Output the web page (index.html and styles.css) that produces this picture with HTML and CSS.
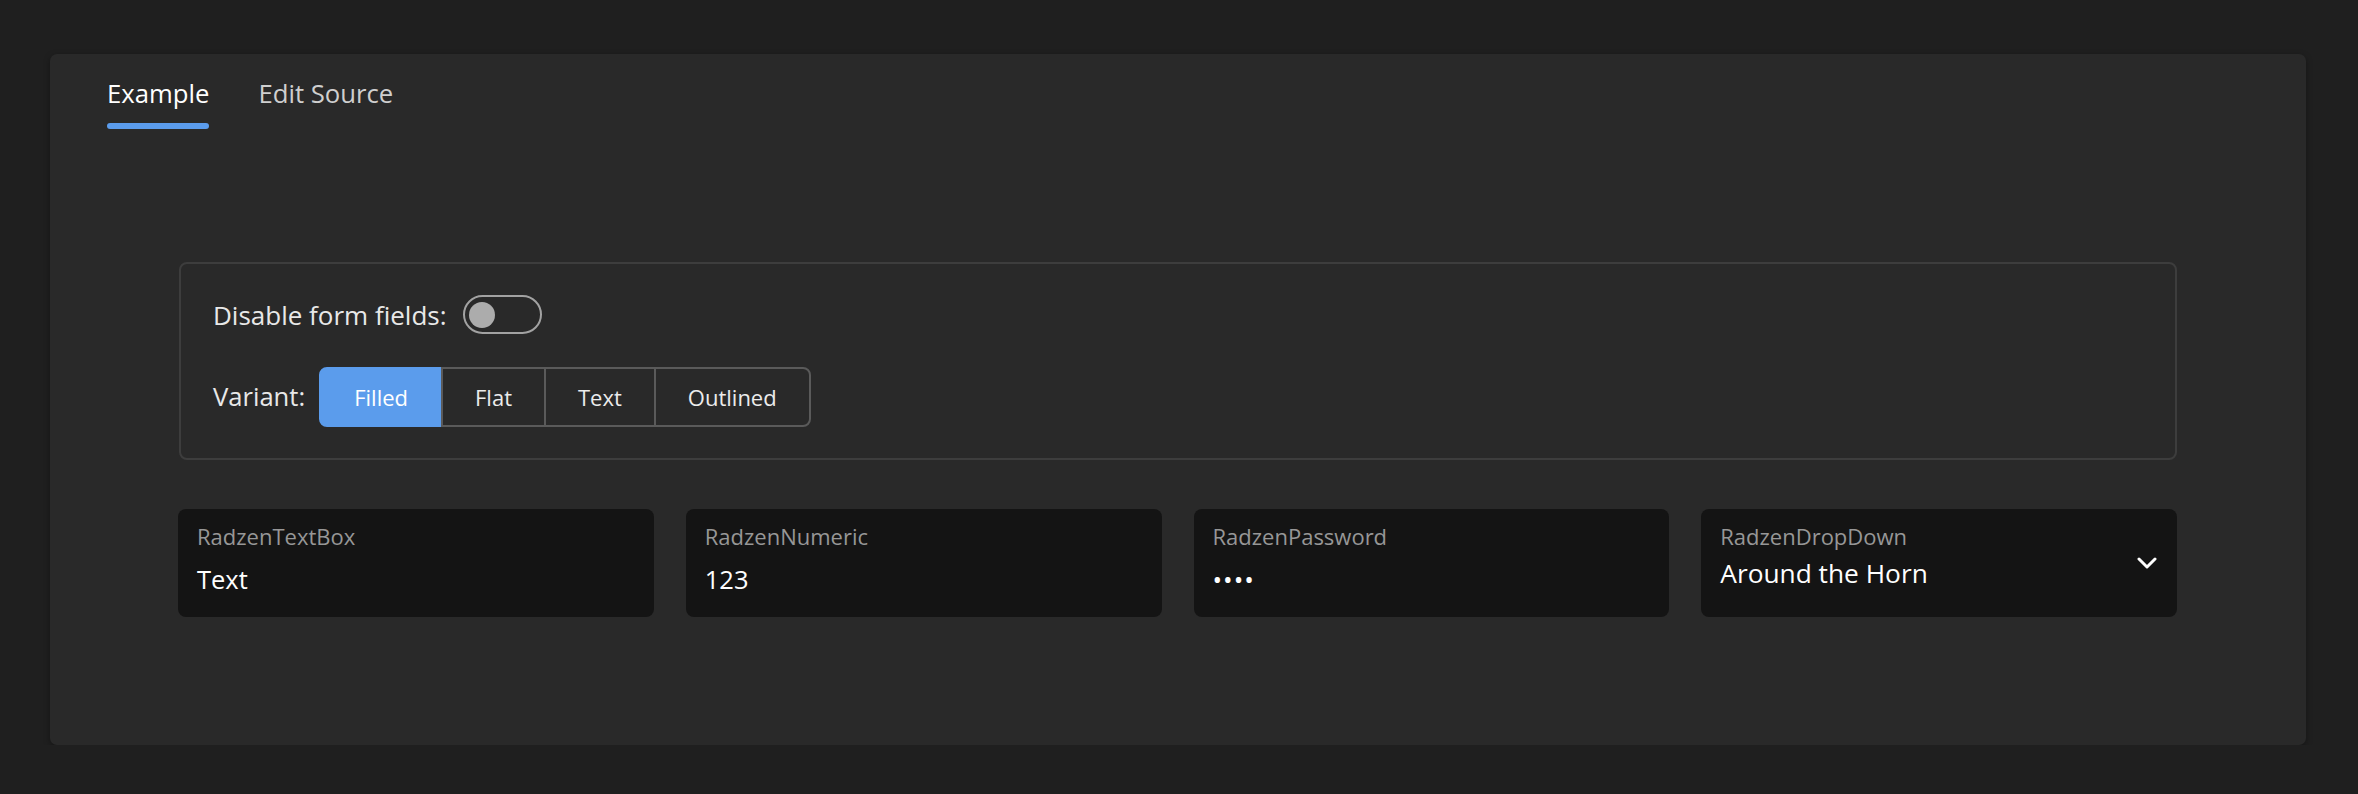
FILE: index.html
```html
<!DOCTYPE html>
<html lang="en">
<head>
<meta charset="utf-8">
<title>Radzen form fields</title>
<link rel="stylesheet" href="styles.css">
</head>
<body>
<div class="card">
  <nav class="tabs">
    <div class="tab active">Example</div>
    <div class="tab">Edit Source</div>
  </nav>
  <div class="panel">
    <div class="options">
      <div class="opt-row opt-row-switch">
        <span class="opt-label">Disable form fields:</span>
        <span class="switch"><span class="knob"></span></span>
      </div>
      <div class="opt-row opt-row-variant">
        <span class="opt-label">Variant:</span>
        <div class="btn-group">
          <span class="btn selected">Filled</span>
          <span class="btn">Flat</span>
          <span class="btn">Text</span>
          <span class="btn">Outlined</span>
        </div>
      </div>
    </div>
    <div class="fields">
      <div class="field">
        <div class="field-label">RadzenTextBox</div>
        <div class="field-value">Text</div>
      </div>
      <div class="field">
        <div class="field-label">RadzenNumeric</div>
        <div class="field-value">123</div>
      </div>
      <div class="field">
        <div class="field-label">RadzenPassword</div>
        <div class="field-value dots">••••</div>
      </div>
      <div class="field field-dropdown">
        <div class="dd-body">
          <div class="field-label">RadzenDropDown</div>
          <div class="field-value dd-value">Around the Horn</div>
        </div>
        <svg class="chevron" width="20" height="12" viewBox="0 0 20 12" aria-hidden="true">
          <polyline points="2,2 10,10 18,2" fill="none" stroke="#ffffff" stroke-width="3" stroke-linecap="round" stroke-linejoin="round"/>
        </svg>
      </div>
    </div>
  </div>
</div>
</body>
</html>
```

FILE: styles.css
```css
html, body {
  margin: 0;
  padding: 0;
  background: #1f1f1f;
}
body {
  padding: 54px 52px 0 50px;
  font-family: "Open Sans", "Noto Sans", sans-serif;
  color: #e6e6e6;
}
.card {
  background: #292929;
  border-radius: 7px;
  box-shadow: 0 2px 6px rgba(0, 0, 0, 0.35);
  min-height: 691px;
  box-sizing: border-box;
}
.tabs {
  display: flex;
  padding-left: 52px;
  gap: 39px;
}
.tab {
  padding: 22px 5px 0;
  font-size: 25.7px;
  line-height: 36px;
  color: #cfcfcf;
}
.tab::after {
  content: "";
  display: block;
  height: 6px;
  margin-top: 11px;
  border-radius: 3px;
  background: transparent;
}
.tab.active {
  color: #ffffff;
}
.tab.active::after {
  background: #5b9cec;
}
.panel {
  padding: 133px 129px 128px 128px;
}
.options {
  border: 2px solid #3d3d3d;
  border-radius: 8px;
  padding: 31px 32px 31px 32px;
  margin-left: 1px;
  display: flex;
  flex-direction: column;
  gap: 33px;
}
.opt-row {
  display: flex;
  align-items: center;
  gap: 16px;
}
.opt-row-switch {
  height: 39px;
}
.opt-row-variant {
  height: 60px;
  gap: 14px;
}
.opt-label {
  font-size: 26px;
  line-height: 36px;
  color: #e8e8e8;
}
.opt-row-variant .opt-label {
  font-size: 25.6px;
}
.switch {
  width: 79px;
  height: 39px;
  box-sizing: border-box;
  border: 2px solid #a2a2a2;
  border-radius: 20px;
  display: flex;
  align-items: center;
  padding-left: 4px;
}
.knob {
  width: 26px;
  height: 26px;
  border-radius: 50%;
  background: #acacac;
}
.btn-group {
  display: flex;
  height: 60px;
}
.btn {
  display: flex;
  align-items: center;
  padding: 0 32px;
  border: 2px solid #5a5a5a;
  font-size: 22px;
  color: #ececec;
  position: relative;
}
.btn + .btn {
  margin-left: -2px;
}
.btn:first-child {
  border-radius: 8px 0 0 8px;
}
.btn:last-child {
  border-radius: 0 8px 8px 0;
}
.btn.selected {
  background: #5b9cec;
  border-color: #5b9cec;
  color: #ffffff;
  padding: 0 33px;
}
.fields {
  margin-top: 49px;
  display: grid;
  grid-template-columns: repeat(4, 1fr);
  gap: 32px;
}
.field {
  height: 108px;
  box-sizing: border-box;
  background: #141414;
  border-radius: 8px;
  padding: 12px 19px 0;
}
.field-label {
  font-size: 22px;
  line-height: 30px;
  color: #979797;
}
.field-value {
  margin-top: 12px;
  font-size: 25.5px;
  line-height: 32px;
  color: #ffffff;
}
.dots {
  letter-spacing: 1px;
}
.field-dropdown {
  display: flex;
  align-items: flex-start;
  padding-right: 20px;
}
.dd-body {
  flex: 1;
}
.dd-value {
  margin-top: 6px;
  font-size: 26.3px;
}
.chevron {
  align-self: center;
  margin-top: -12px;
  flex: none;
}
```
